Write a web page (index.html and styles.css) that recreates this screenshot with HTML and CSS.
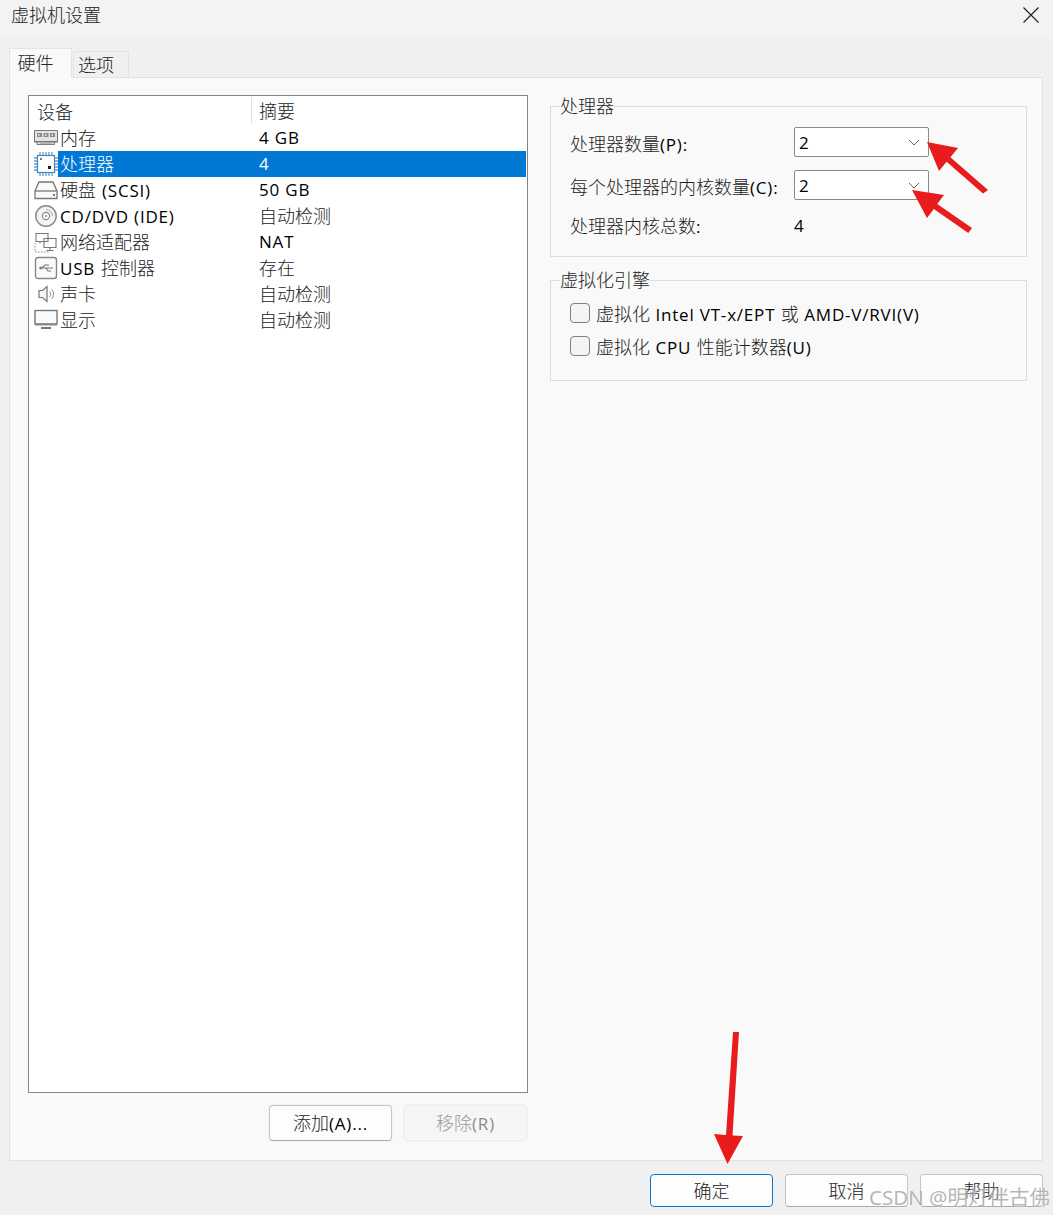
FILE: index.html
```html
<!DOCTYPE html>
<html lang="zh-CN">
<head>
<meta charset="utf-8">
<title>虚拟机设置</title>
<link rel="stylesheet" href="styles.css">
</head>
<body>
<div class="window">
  <header class="titlebar">
    <span class="title">虚拟机设置</span>
    <svg class="close" width="18" height="18" viewBox="0 0 18 18"><path d="M1.5 1.5 16.500 16.500M16.500 1.5 1.5 16.500" stroke="#222" stroke-width="1.2" fill="none"/></svg>
  </header>
  <main class="content">
    <nav class="tabs">
      <div class="tab active">硬件</div>
      <div class="tab">选项</div>
    </nav>
    <section class="panel">
      <div class="left">
        <div class="list">
          <div class="list-head">
            <div class="h1">设备</div>
            <div class="h2">摘要</div>
          </div>
          <div class="row">
            <svg class="ico" viewBox="0 0 24 24"><path d="M.5 4.500h23v11h-3v3H3v-3H.5z" fill="#e4e4e4" stroke="#777"/><path d="M3 7h5v4H3zM9.500 7h5v4h-5zM16 7h5v4h-5z" fill="#888"/><path d="M4 8h1.500v2H4zM11 8h1.500v2H11zM17.500 8H19v2h-1.500z" fill="#ddd"/><path d="M0 15h24v1.500H0z" fill="#777"/><path d="M6 18h12" stroke="#888"/></svg>
            <div class="name">内存</div><div class="val lat">4 GB</div>
          </div>
          <div class="row selected">
            <svg class="ico" viewBox="0 0 24 24"><rect x="3.500" y="3.500" width="17" height="17" fill="#fff" stroke="#3f86c4" stroke-width="1.2"/><path d="M6 0v3M9 0v3M12 0v3M15 0v3M18 0v3M6 21v3M9 21v3M12 21v3M15 21v3M18 21v3M0 6h3M0 9h3M0 12h3M0 15h3M0 18h3M21 6h3M21 9h3M21 12h3M21 15h3M21 18h3" stroke="#6b9ac4" stroke-width="1.3"/><path d="M6 6h2v2H6z" fill="#777"/><path d="M14 14h3v3h-3z" fill="#222"/></svg>
            <div class="name">处理器</div><div class="val lat">4</div>
          </div>
          <div class="row">
            <svg class="ico" viewBox="0 0 24 24"><path d="M5 4h14l4 9v7.500H1V13z" fill="#fafafa" stroke="#777" stroke-width="1.3"/><path d="M1 13h22" stroke="#777" stroke-width="1.3"/><path d="M19 16h2v2h-2z" fill="#777"/></svg>
            <div class="name">硬盘 <span class="lat">(SCSI)</span></div><div class="val lat">50 GB</div>
          </div>
          <div class="row">
            <svg class="ico" viewBox="0 0 24 24"><circle cx="12" cy="12" r="10.200" fill="#f4f4f4" stroke="#888" stroke-width="1.4"/><circle cx="12" cy="12" r="3.600" fill="#fff" stroke="#888" stroke-width="1.2"/><circle cx="12" cy="12" r="1" fill="#888"/><path d="M12 5.500a6.500 6.500 0 0 1 6.500 6.500" fill="none" stroke="#aaa"/></svg>
            <div class="name"><span class="lat">CD/DVD (IDE)</span></div><div class="val">自动检测</div>
          </div>
          <div class="row">
            <svg class="ico" viewBox="0 0 24 24"><path d="M2 3.500h12v8H2zM10 8.500h12v9H10z" fill="#fff" stroke="#777" stroke-width="1.1"/><path d="M16 17.500v3M12.500 20.500h7M6 11.500v2" stroke="#777" stroke-width="1.1"/><path d="M1 13v9h14" fill="none" stroke="#888" stroke-dasharray="1.5 1.5"/></svg>
            <div class="name">网络适配器</div><div class="val lat">NAT</div>
          </div>
          <div class="row">
            <svg class="ico" viewBox="0 0 24 24"><rect x="1.500" y="1.500" width="21" height="21" rx="2.500" fill="#fafafa" stroke="#888" stroke-width="1.4"/><path d="M5 12h14M8 12l3-3h4M12 12l2 3h3" fill="none" stroke="#777" stroke-width="1.1"/><path d="M5 12l2.500-2v4z" fill="#777"/></svg>
            <div class="name"><span class="lat">USB</span> 控制器</div><div class="val">存在</div>
          </div>
          <div class="row">
            <svg class="ico" viewBox="0 0 24 24"><path d="M5 8.500h3.500L13 4.500v15l-4.500-4H5z" fill="#f6f6f6" stroke="#777" stroke-width="1.2"/><path d="M15.500 9a4 4 0 0 1 0 6M17.500 7a7 7 0 0 1 0 10" fill="none" stroke="#999"/></svg>
            <div class="name">声卡</div><div class="val">自动检测</div>
          </div>
          <div class="row">
            <svg class="ico" viewBox="0 0 24 24"><rect x="1" y="2.500" width="22" height="13.500" fill="#fafafa" stroke="#777" stroke-width="1.4"/><path d="M1 15.500h22v2H1z" fill="#888"/><path d="M7 20h10" stroke="#777" stroke-width="2"/></svg>
            <div class="name">显示</div><div class="val">自动检测</div>
          </div>
        </div>
        <div class="list-actions">
          <button class="btn" type="button">添加<span class="lat">(A)...</span></button>
          <button class="btn disabled" type="button">移除<span class="lat">(R)</span></button>
        </div>
      </div>
      <div class="right">
        <fieldset class="group cpu">
          <legend>处理器</legend>
          <div class="field"><label>处理器数量<span class="lat">(P):</span></label><div class="combo"><span class="lat">2</span><svg width="12" height="7" viewBox="0 0 12 7"><path d="M1 1l5 5 5-5" fill="none" stroke="#666"/></svg></div></div>
          <div class="field"><label>每个处理器的内核数量<span class="lat">(C):</span></label><div class="combo"><span class="lat">2</span><svg width="12" height="7" viewBox="0 0 12 7"><path d="M1 1l5 5 5-5" fill="none" stroke="#666"/></svg></div></div>
          <div class="field total"><label>处理器内核总数<span class="lat">:</span></label><span class="lat">4</span></div>
        </fieldset>
        <fieldset class="group virt">
          <legend>虚拟化引擎</legend>
          <div class="check"><span class="box"></span><span>虚拟化 <span class="lat">Intel VT-x/EPT</span> 或 <span class="lat">AMD-V/RVI(V)</span></span></div>
          <div class="check"><span class="box"></span><span>虚拟化 <span class="lat">CPU</span> 性能计数器<span class="lat">(U)</span></span></div>
        </fieldset>
      </div>
    </section>
  </main>
  <footer class="footer">
    <button class="btn primary" type="button">确定</button>
    <button class="btn" type="button">取消</button>
    <button class="btn" type="button">帮助</button>
  </footer>
  <svg class="arrows" width="1053" height="1215" viewBox="0 0 1053 1215">
    <path d="M927 142 958 148 950.400 157.200 988 190 983 193.500 946.600 161.800 939 171z" fill="#e81c1c"/>
    <path d="M912 190 944 195 937.200 204 972 228 968.300 233 933.800 209 927 218z" fill="#e81c1c"/>
    <path d="M727.500 1164 714 1134 726 1135 733 1032 739 1032 732.500 1135.500 743 1136z" fill="#e81c1c"/>
  </svg>
  <div class="watermark">CSDN @明灯伴古佛</div>
</div>
</body>
</html>
```

FILE: styles.css
```css
* { box-sizing: border-box; }
html, body { margin: 0; padding: 0; }
body {
  width: 1053px;
  height: 1215px;
  overflow: hidden;
  background: #f0f0f0;
  color: #222;
  font-family: "Noto Sans CJK SC", "Noto Sans", sans-serif;
  font-size: 18px;
  font-weight: 300;
}
.lat {
  font-family: "Open Sans", "Noto Sans CJK SC", sans-serif;
  font-weight: 400;
  color: #000;
  font-size: 17px;
  letter-spacing: 0.8px;
  word-spacing: 0;
}
.window {
  position: relative;
  width: 1053px;
  height: 1215px;
  display: flex;
  flex-direction: column;
}
.titlebar {
  height: 38px;
  flex: none;
  background: #f3f3f3;
  display: flex;
  align-items: center;
  justify-content: space-between;
  padding: 0 13px 8px 11px;
}
.title { line-height: 24px; margin-bottom: 2px; }
.close { display: block; }
.content {
  flex: none;
  height: 1123px;
  padding: 10px 10px 0 9px;
  display: flex;
  flex-direction: column;
}
.tabs {
  flex: none;
  height: 30px;
  display: flex;
  align-items: flex-end;
  position: relative;
  z-index: 1;
  margin-bottom: -1px;
}
.tab {
  width: 56px;
  height: 26px;
  margin-left: 1px;
  margin-bottom: 1px;
  padding-right: 10px;
  border: 1px solid #e4e4e4;
  border-bottom: none;
  background: #f0f0f0;
  text-align: center;
  line-height: 25px;
}
.tab.active {
  width: 63px;
  height: 30px;
  margin: 0;
  background: #f9f9f9;
  line-height: 27px;
  padding-right: 10px;
}
.panel {
  flex: 1;
  min-height: 0;
  display: flex;
  gap: 22px;
  padding: 17px 15px 19px 18px;
  background: #f9f9f9;
  border: 1px solid #e2e2e2;
}
.left {
  width: 500px;
  flex: none;
  display: flex;
  flex-direction: column;
  gap: 12px;
}
.list {
  flex: 1;
  background: #fff;
  border: 1px solid #85858f;
  padding-bottom: 2px;
}
.list-head {
  height: 29px;
  display: flex;
  align-items: center;
  background: #fff;
}
.h1 {
  width: 223px;
  padding-left: 8px;
  height: 27px;
  line-height: 28px;
  border-right: 1px solid #e0e0e0;
}
.h2 { padding-left: 7px; line-height: 27px; height: 27px; }
.row {
  height: 26px;
  display: flex;
  align-items: center;
  padding-right: 1px;
}
.ico {
  flex: none;
  width: 24px;
  height: 24px;
  margin: 0 0 0 5px;
}
.name {
  flex: none;
  width: 200px;
  height: 26px;
  line-height: 24px;
  padding-left: 2px;
  white-space: nowrap;
  word-spacing: 2px;
}
.val {
  flex: 1;
  height: 26px;
  line-height: 24px;
  padding-left: 1px;
}
.val.lat { line-height: 26px; }
.row.selected .name, .row.selected .val {
  background: #0078d4;
  color: #fff;
}
.list-actions {
  flex: none;
  height: 36px;
  display: flex;
  justify-content: flex-end;
  gap: 12px;
  padding-right: 1px;
}
.btn {
  width: 123px;
  height: 36px;
  padding: 0 0 2px;
  background: #fdfdfd;
  border: 1px solid #c4c4c4;
  border-bottom-color: #aaa;
  border-radius: 4px;
  font-family: inherit;
  font-size: 18px;
  font-weight: 300;
  color: #222;
  box-shadow: 0 0 0 1px #f3f3f3;
}
.btn.disabled {
  background: #f6f6f6;
  border-color: #eee;
  color: #999;
}
.btn.disabled .lat { color: #8a8a8a; }
.right {
  flex: 1;
  min-width: 0;
  padding-top: 1px;
  display: flex;
  flex-direction: column;
  gap: 13px;
}
.group {
  margin: 0;
  min-width: 0;
  border: 1px solid #dcdcdc;
  padding: 0 19px;
}
.group legend {
  padding: 0 0 2px;
  margin-left: -10px;
  line-height: 18px;
}
.cpu { height: 161px; }
.virt { height: 111px; }
.field {
  display: flex;
  align-items: center;
  height: 30px;
  margin-bottom: 13px;
}
.cpu .field:first-of-type { margin-top: 11px; }
.field label { width: 224px; flex: none; white-space: nowrap; padding-top: 2px; }
.total { margin-top: 10px; height: 24px; }
.total label { padding-top: 0; }
.combo {
  width: 135px;
  height: 30px;
  background: #fff;
  border: 1px solid #8a8a8a;
  border-radius: 2px;
  display: flex;
  align-items: center;
  justify-content: space-between;
  padding: 0 8px 0 4px;
}
.check {
  display: flex;
  align-items: center;
  height: 33px;
  gap: 6px;
  white-space: nowrap;
  word-spacing: 1.5px;
}
.virt legend + .check { margin-top: 6px; }
.box {
  width: 20px;
  height: 20px;
  flex: none;
  background: #f4f4f4;
  border: 1px solid #808080;
  border-radius: 4px;
}
.footer {
  flex: none;
  height: 54px;
  padding: 13px 10px 0 0;
  display: flex;
  justify-content: flex-end;
  align-items: flex-start;
  gap: 12px;
}
.footer .btn { height: 33px; box-shadow: none; }
.btn.primary { border: 1.5px solid #0078d4; }
.arrows {
  position: absolute;
  left: 0;
  top: 0;
  pointer-events: none;
}
.watermark {
  position: absolute;
  right: 3px;
  bottom: 4px;
  font-size: 20.5px;
  font-family: "Noto Sans", "Noto Sans CJK SC", sans-serif;
  font-weight: 400;
  color: rgba(120, 120, 120, 0.55);
  text-shadow: 0 0 2px rgba(255, 255, 255, 0.9);
  white-space: nowrap;
}
```
